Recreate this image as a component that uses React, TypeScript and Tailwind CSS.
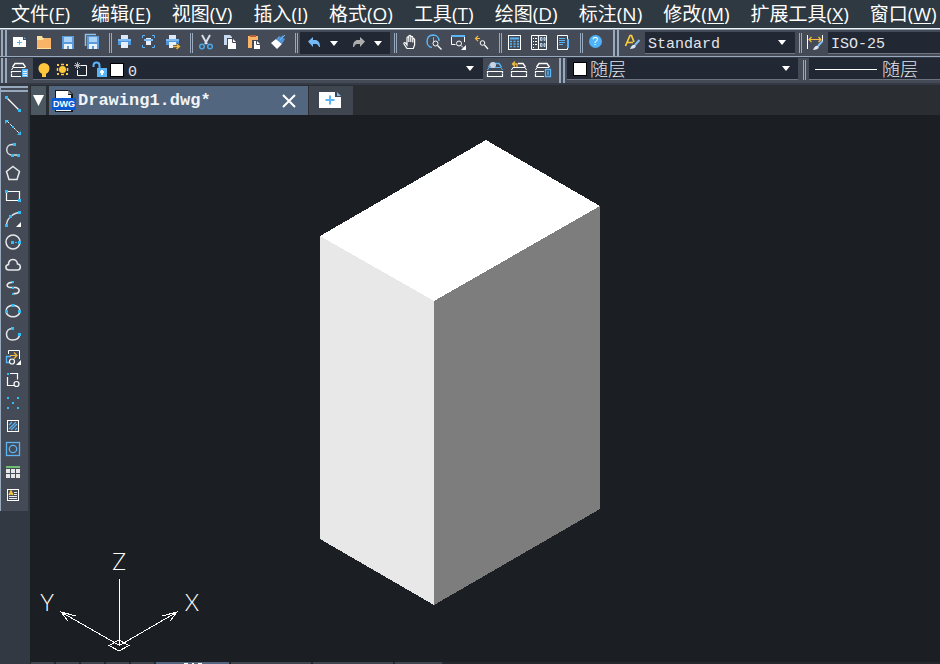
import type { ReactNode } from "react";

const BLUE = "#5ab4f5";
const SKY = "#33bdf7";
const AMBER = "#f6bb3c";

function Glyph({ children }: { children: ReactNode }) {
  return (
    <svg viewBox="0 0 20 20" className="block size-5 shrink-0" fill="none" stroke="none" aria-hidden="true">
      {children}
    </svg>
  );
}

function Tool({ label, children }: { label: string; children: ReactNode }) {
  return (
    <button type="button" aria-label={label} className="flex h-6 w-6 shrink-0 items-center justify-center">
      <Glyph>{children}</Glyph>
    </button>
  );
}

function Grip() {
  return <div className="w-1.5 shrink-0 self-stretch border-x-2 border-[#99a9bd]" />;
}

function Separator() {
  return <div className="h-5 w-[3px] shrink-0 border-x border-[#99a9bd]" />;
}

function Caret() {
  return (
    <svg viewBox="0 0 8 5" className="h-[5px] w-2" aria-hidden="true">
      <path d="M0 0h8L4 5z" fill="#fff" />
    </svg>
  );
}

function Combo({ label, value, className, pad }: { label: string; value: string; className: string; pad: string }) {
  return (
    <div className={`relative h-[22px] border-b border-[#6d747f] bg-[#212733] ${className}`}>
      <select
        aria-label={label}
        className={`block h-[21px] w-full appearance-none bg-transparent text-[#e2e5e9] outline-none ${pad}`}
      >
        <option>{value}</option>
      </select>
    </div>
  );
}

const menus: [string, string][] = [
  ["文件", "F"], ["编辑", "E"], ["视图", "V"], ["插入", "I"], ["格式", "O"], ["工具", "T"],
  ["绘图", "D"], ["标注", "N"], ["修改", "M"], ["扩展工具", "X"], ["窗口", "W"],
];

function MenuBar() {
  return (
    <nav className="flex h-7 items-center overflow-hidden bg-[#2f3941] font-['Open_Sans','Noto_Sans_CJK_SC',sans-serif] text-[19px] leading-7 text-white">
      {menus.map(([name, key]) => (
        <button key={key} type="button" className="shrink-0 pr-2.5 pl-[11px] whitespace-nowrap">
          {name}(<span className="underline underline-offset-2">{key}</span>)
        </button>
      ))}
    </nav>
  );
}

function PrinterShape() {
  return (
    <g shapeRendering="crispEdges">
      <path d="M7 2h7v4H7z" fill="#dce8f5" />
      <path d="M4 6h13v6H4z" fill="#4f97dc" />
      <path d="M4 6h13v2H4z" fill="#7dbaf2" />
      <path d="M7 9h7v6H7z" fill="#e7effa" />
    </g>
  );
}

function Floppy({ x, y }: { x: number; y: number }) {
  return (
    <g transform={`translate(${x} ${y})`} shapeRendering="crispEdges">
      <path d="M0 0h12v13H0z" fill="#5b9bdc" />
      <path d="M2 1h8v5H2z" fill="#a9d3fb" />
      <path d="M2 8h8v5H2z" fill="#e9f2fb" />
      <path d="M5 10h2v3H5z" fill="#5b9bdc" />
    </g>
  );
}

function Stack({ top = "#fff" }: { top?: string }) {
  return (
    <>
      <path d="M3.500 7L6 3.500h8L16.500 7" stroke={top} strokeWidth="1.300" />
      <path d="M2.500 10L4 7.500h12l1.500 2.500" stroke={top} />
      <path d="M2.500 13.500v-2h15v2M2.500 14v2.500h15V14" stroke="#fff" strokeWidth="1.200" />
    </>
  );
}

function MainToolbar() {
  return (
    <div className="flex h-[26px] items-center overflow-hidden bg-[#454b56] pl-px">
      <Grip />
      <Tool label="新建">
        <path d="M4 4h10v3h3v7H4z" fill="#fff" />
        <path d="M15 4l2 2h-2z" fill={BLUE} />
        <path d="M8 9.500h5M10.500 7v5" stroke={BLUE} strokeWidth="1" />
      </Tool>
      <Tool label="打开">
        <path d="M4 3h5l1 2h8v11H4z" fill="#ffe09a" />
        <path d="M4 7h6l1-2h7v10H4z" fill="#f9b468" />
      </Tool>
      <Tool label="保存"><Floppy x={5} y={3} /></Tool>
      <Tool label="全部保存">
        <path d="M4.500 13V1.500H15" stroke="#8ec1f2" strokeWidth="1.500" />
        <Floppy x={6} y={3} />
      </Tool>
      <div className="ml-1.5"><Separator /></div>
      <Tool label="打印"><PrinterShape /></Tool>
      <Tool label="打印预览">
        <path d="M4.500 5V2.500H7M14 2.500h2.500V5M16.500 12v2.500H14M7 14.500H4.500V12" stroke={BLUE} />
        <path d="M8 5h5v2H8zM8 8h5v4H8z" fill="#e7effa" />
        <path d="M6 6h9v2H6z" fill="#7dbaf2" />
      </Tool>
      <Tool label="发布">
        <PrinterShape />
        <path d="M11 13.500h6M14.500 11l3 2.500-3 2.500" stroke="#454b56" strokeWidth="3" />
        <path d="M11 13.500h6M14.500 11l3 2.500-3 2.500" stroke={AMBER} strokeWidth="1.300" />
      </Tool>
      <div className="ml-1.5"><Separator /></div>
      <Tool label="剪切">
        <path d="M7 2l5 9M15 2l-5 9" stroke="#d6dfeb" strokeWidth="2" />
        <circle cx="7" cy="13.500" r="2.300" stroke="#4ba7e8" strokeWidth="1.500" />
        <circle cx="15" cy="13.500" r="2.300" stroke="#4ba7e8" strokeWidth="1.500" />
      </Tool>
      <Tool label="复制">
        <path d="M5 2h6l2 2v8H5z" fill="#c7daf0" />
        <path d="M8 5h6l4 4v8H8z" fill="#454b56" />
        <path d="M9 6h5l3 3v7H9z" fill="#fff" />
        <path d="M13.500 6v3.500H17" stroke="#454b56" />
      </Tool>
      <Tool label="粘贴">
        <path d="M5 3h10v12H5z" fill="#f9b468" />
        <path d="M7 2h6v2H7z" fill="#b3603a" />
        <path d="M9 7h6l3 3v7H9z" fill="#454b56" />
        <path d="M11 8h3l3 3v5h-6z" fill="#fff" />
        <path d="M13.500 8v3.500H17" stroke="#454b56" />
      </Tool>
      <Tool label="特性匹配">
        <path d="M4 10l5-4 6 5-5 5z" fill="#fff" />
        <path d="M9 6l3-3 2 1 2-2 1 1-1 2 2 1-3 5z" fill="#4d94d8" />
        <path d="M18 2l-5 5" stroke="#76b6f0" />
      </Tool>
      <div className="mr-0.5 ml-1.5"><Separator /></div>
      <div className="flex h-[22px] w-[90px] shrink-0 items-center gap-1 bg-[#212733] pl-1">
        <div className="flex items-center">
          <button type="button" aria-label="放弃">
            <Glyph><path d="M4 8.500L9 4v3h2c3 0 5 2 5 7h-1c-1-2.500-2-3-4-3H9v3z" fill="#76b8f5" /></Glyph>
          </button>
          <button type="button" aria-label="放弃列表" className="flex w-5 justify-center"><Caret /></button>
        </div>
        <div className="flex items-center">
          <button type="button" aria-label="重做">
            <Glyph><path d="M17 8.500L12 4v3h-2c-3 0-5 2-5 7h1c1-2.500 2-3 4-3h2v3z" fill="#adadad" /></Glyph>
          </button>
          <button type="button" aria-label="重做列表" className="flex w-5 justify-center"><Caret /></button>
        </div>
      </div>
      <div className="ml-1"><Separator /></div>
      <Tool label="平移">
        <path d="M8 15.500L5 11c-.5-1 .5-2 1.500-1L8 12V5c0-1.500 1.800-1.500 1.800 0V9 3.500c0-1.500 2-1.500 2 0V9 4.500c0-1.500 2-1.500 2 0V9.500 6.500c0-1.300 1.800-1.300 1.800 0V12l-1.300 3.500z" stroke="#fff" strokeWidth="1.200" />
      </Tool>
      <Tool label="实时缩放">
        <path d="M9 14.500C2.500 14 2 2.500 10 2c4 0 6 3 6 6" stroke={BLUE} strokeWidth="1.500" />
        <path d="M10.500 4v6" stroke={BLUE} />
        <circle cx="12.500" cy="10.500" r="2.500" fill="#454b56" stroke="#fff" />
        <path d="M14.500 12.500l4 4" stroke="#fff" strokeWidth="1.300" />
      </Tool>
      <Tool label="窗口缩放">
        <path d="M4.500 3v8.500h4M17.500 3v6" stroke="#fff" />
        <path d="M4 2h14v2H4z" fill={BLUE} />
        <circle cx="12" cy="10.500" r="2.500" stroke="#fff" />
        <path d="M14 12.500l2 2" stroke="#fff" />
        <path d="M19 12v5h-5z" fill="#fff" />
      </Tool>
      <Tool label="上一个缩放">
        <path d="M9 5.500H4.500M7 3L4.500 5.500 7 8" stroke={AMBER} strokeWidth="1.200" />
        <circle cx="11.500" cy="10" r="2.300" stroke="#fff" />
        <path d="M13.500 12l3.500 4" stroke="#fff" strokeWidth="1.200" />
      </Tool>
      <div className="ml-1.5"><Separator /></div>
      <Tool label="计算器">
        <rect x="4.500" y="2.500" width="12" height="14" stroke="#fff" />
        <path d="M6 5.500h9" stroke={BLUE} strokeWidth="2" />
        <path d="M6 8.500h9M6 11h9M6 13.500h9" stroke={BLUE} strokeWidth="1.500" strokeDasharray="2 1.500" />
      </Tool>
      <Tool label="设计中心">
        <path d="M3.500 2.500h15v14h-15zM10.500 2.500v14" stroke="#fff" />
        <path d="M12.500 4.500h1.500v3h-1.500zM16 4.500h1v3h-1zM12.500 10.500h1.500v3h-1.500zM16 10.500h1v3h-1z" stroke="#b9d9f7" />
        <path d="M5 5.500h1M7 5.500h2M5 8.500h1M7 8.500h2M5 11.500h1M7 11.500h2M5 14.500h1" stroke="#fff" />
      </Tool>
      <Tool label="特性">
        <path d="M15.500 6V2.500h-10v14h10V14" stroke="#fff" />
        <path d="M15 6h2v9h-2z" fill={BLUE} />
        <path d="M7 5.500h6M7 7.500h6M7 9.500h6M7 11.500h4" stroke={BLUE} />
      </Tool>
      <div className="ml-1.5"><Separator /></div>
      <button type="button" aria-label="帮助" className="flex h-6 w-6 shrink-0 justify-center pt-1">
        <span className="size-[13px] rounded-full bg-[#4fb2fa] text-center font-['Liberation_Sans',sans-serif] text-[11px] leading-[13px] text-white">?</span>
      </button>
      <div className="ml-1.5 flex self-stretch"><Grip /></div>
      <Tool label="文字样式">
        <path d="M4.500 13L9 2.500h1.500L13 9M6 9.500h6" stroke="#f9ce3c" strokeWidth="1.700" />
        <path d="M18.500 7L14 12" stroke="#83bdf0" strokeWidth="2" />
        <path d="M9 16c1-3 3-5 5-4s0 4-5 4z" fill="#d7e4f4" />
      </Tool>
      <div className="relative ml-0.5 w-[150px] shrink-0">
        <Combo label="文字样式列表" value="Standard" className="font-['Liberation_Mono',monospace] text-[15px]" pad="pt-0.5 pl-[3px]" />
        <span className="pointer-events-none absolute top-2 right-[9px] flex"><Caret /></span>
      </div>
      <div className="ml-1"><Separator /></div>
      <Tool label="标注样式">
        <path d="M3.500 2v14M18.500 2v7" stroke="#fff" />
        <path d="M5 6.500h12M7.500 4L5 6.500 7.500 9M14.500 4L17 6.500 14.500 9" stroke={AMBER} strokeWidth="1.200" />
        <path d="M18.500 8L14 13" stroke="#83bdf0" strokeWidth="2" />
        <path d="M9 17c1-3 3-5 5-4s0 4-5 4z" fill="#d7e4f4" />
      </Tool>
      <Combo label="标注样式列表" value="ISO-25" className="ml-0.5 min-w-0 flex-1 font-['Liberation_Mono',monospace] text-[15px]" pad="pt-0.5 pl-[3px]" />
    </div>
  );
}

function LayerToolbar() {
  return (
    <div className="flex h-[25px] items-start overflow-hidden bg-[#454b56] pl-px">
      <Grip />
      <Tool label="图层特性管理器">
        <Stack />
        <path d="M12 8h7v9h-7z" fill="#454b56" />
        <path d="M13 9h6v8h-6z" fill="#5bb8fb" />
        <path d="M14 11.500h4M14 13.500h4M14 15.500h4" stroke="#e6f3fe" />
      </Tool>
      <div className="relative ml-0.5 w-[450px] shrink-0">
        <Combo label="图层" value="0" className="font-['Liberation_Mono',monospace] text-[15px]" pad="pt-1 pl-[95px]" />
        <div className="pointer-events-none absolute top-0.5 left-px flex gap-px">
          <svg viewBox="0 0 18 18" className="size-[18px]">
            <circle cx="10" cy="8.500" r="5.500" fill="#ffc83d" />
            <path d="M8 13h4v4H8z" fill="#ffc83d" />
          </svg>
          <svg viewBox="0 0 18 18" className="size-[18px]">
            <circle cx="9.500" cy="9.500" r="3.500" fill="#ffc83d" />
            <path d="M4 4h2v2H4zM13 4h2v2h-2zM4 13h2v2H4zM13 13h2v2h-2z" fill="#ffc83d" />
            <path d="M8 4.500h3M8 14.500h3M4.500 8v3M14.500 8v3" stroke="#ffc83d" strokeWidth="1.500" />
          </svg>
          <svg viewBox="0 0 18 18" className="size-[18px]" fill="none" stroke="#fff">
            <path d="M9 5.500h5.500v10h-9V10" />
            <path d="M5.500 2v7M2 5.500h7M3 3l5 5M8 3L3 8" stroke="#b7bbc0" />
          </svg>
          <svg viewBox="0 0 18 18" className="size-[18px]">
            <path d="M2.500 7V5.500c0-4 6-4 6 0V8" fill="none" stroke={BLUE} strokeWidth="2" />
            <path d="M6 8h10v9H6z" fill={BLUE} />
            <path d="M11 10v5M9 12h4" stroke="#fff" strokeWidth="2" />
          </svg>
          <span className="mt-1 ml-px size-3 bg-white outline outline-black" />
        </div>
        <span className="pointer-events-none absolute top-2 right-[9px] flex"><Caret /></span>
      </div>
      <Tool label="将对象的图层置为当前">
        <Stack top={BLUE} />
        <circle cx="8" cy="5" r="3" fill="#cad3e3" />
      </Tool>
      <Tool label="上一个图层">
        <Stack />
        <path d="M1 1h8v6H1z" fill="#454b56" />
        <path d="M8 7V4H3.500M6 1.500L3.500 4 6 6.500" stroke={AMBER} strokeWidth="1.300" />
      </Tool>
      <Tool label="图层状态管理器">
        <Stack />
        <path d="M11 8h8v9h-8z" fill="#454b56" />
        <path d="M12.500 9.500h5v7h-5zM14 12h2M14 14h2" stroke={BLUE} strokeWidth="1.300" />
      </Tool>
      <div className="mr-0.5 ml-1 flex self-stretch"><Grip /></div>
      <div className="relative w-[231px] shrink-0">
        <Combo label="颜色" value="随层" className="font-['Noto_Sans_CJK_SC',sans-serif] text-[18px] leading-[21px] font-light" pad="pl-[23px]" />
        <span className="pointer-events-none absolute top-[5px] left-[7px] size-3 bg-white outline outline-black" />
        <span className="pointer-events-none absolute top-2 right-2 flex"><Caret /></span>
      </div>
      <div className="mt-0.5 mr-[3px] ml-[5px]"><Separator /></div>
      <div className="relative min-w-0 flex-1">
        <Combo label="线型" value="随层" className="font-['Noto_Sans_CJK_SC',sans-serif] text-[18px] leading-[21px] font-light" pad="pl-[73px]" />
        <span className="pointer-events-none absolute top-[11px] left-1.5 h-px w-[62px] bg-white" />
      </div>
    </div>
  );
}

function Dot({ x, y }: { x: number; y: number }) {
  return <rect x={x - 1.5} y={y - 1.5} width="3" height="3" fill={SKY} />;
}

const drawTools: { label: string; art: ReactNode }[] = [
  { label: "直线", art: <><path d="M4 4l13 13" stroke="#fff" strokeWidth="1.200" /><Dot x={3.5} y={3.5} /><Dot x={16.5} y={16.5} /></> },
  { label: "构造线", art: <><path d="M4 4l13 13" stroke="#fff" strokeDasharray="3 1.500" /><path d="M2 3h4L2 7zM18 18h-4l4-4z" fill={SKY} /><rect x="9" y="9" width="2" height="2" fill={SKY} /></> },
  { label: "多段线", art: <><path d="M11.500 4.500H9c-7 0-7 10.500 0 10.500h7" stroke="#dce1e6" strokeWidth="1.400" /><Dot x={11.5} y={4.5} /><Dot x={9.5} y={15.5} /><Dot x={15.5} y={15.5} /></> },
  { label: "多边形", art: <path d="M10 3.500l6.500 5-2.500 8H6l-2.500-8z" stroke="#e6e9ec" strokeWidth="1.500" /> },
  { label: "矩形", art: <><path d="M3.500 5.500h13v9h-13z" stroke="#fff" strokeWidth="1.200" /><Dot x={3.5} y={5.5} /><Dot x={16.5} y={14.5} /></> },
  { label: "圆弧", art: <><path d="M3.500 16.500c0-6 5-12 13-13" stroke="#dce1e6" strokeWidth="1.400" /><Dot x={3.5} y={16.5} /><Dot x={7.5} y={7.5} /><Dot x={16.5} y={3.5} /><path d="M18 13v5h-5z" fill="#fff" /></> },
  { label: "圆", art: <><circle cx="10" cy="10" r="7" stroke="#e6e9ec" strokeWidth="1.500" /><Dot x={9.5} y={10.5} /><Dot x={16.5} y={10.5} /><path d="M12 10.500h2" stroke={SKY} /></> },
  { label: "修订云线", art: <path d="M6 15c-4 0-4-5-.5-5.500C5 3 14 3 14.500 9c4 0 3.500 6 0 6z" stroke="#e6e9ec" strokeWidth="1.600" /> },
  { label: "样条曲线", art: <><path d="M10 4.500C4 3.500 2 9 7 9.500h6c5 1 4 7-3 6" stroke="#e6e9ec" strokeWidth="1.600" /><path d="M9 3h2v2H9zM9 9h2v2H9zM9 15h2v2H9z" fill={SKY} /></> },
  { label: "椭圆", art: <><ellipse cx="10" cy="10" rx="7" ry="5.800" stroke="#e6e9ec" strokeWidth="1.500" /><Dot x={10} y={4.5} /><Dot x={3.5} y={10.5} /><Dot x={16.5} y={10.5} /></> },
  { label: "椭圆弧", art: <><path d="M9.500 4.500c-8 0-8 11.500 0 11.500 4 0 7-2 7-6" stroke="#e6e9ec" strokeWidth="1.500" /><Dot x={9.5} y={4.5} /><Dot x={16.5} y={10.5} /></> },
  { label: "插入块", art: <><path d="M5.500 7V3.500h11V12" stroke="#fff" /><path d="M7 15.500H3.500v-6H8" stroke={BLUE} strokeWidth="1.300" /><path d="M7 8.500h7M11 5.500l3 3-3 3" stroke={AMBER} strokeWidth="1.200" /><circle cx="9" cy="14.500" r="2.500" fill="#454b56" stroke="#fff" strokeWidth="1.200" /><path d="M18 13v5h-5z" fill="#fff" /></> },
  { label: "创建块", art: <><path d="M7 3.500h7.500v6M4.500 7v8.500h7" stroke="#fff" strokeWidth="1.200" /><circle cx="13.500" cy="14" r="2.500" stroke="#fff" strokeWidth="1.200" /><rect x="4" y="3" width="2" height="2" fill={SKY} /></> },
  { label: "点", art: <>{[[5, 5], [15, 5], [10, 10], [5, 15], [15, 15]].map(([x, y]) => <rect key={`${x}-${y}`} x={x - 1} y={y - 1} width="2" height="2" fill={SKY} />)}</> },
  { label: "图案填充", art: <><rect x="4.500" y="4.500" width="11" height="11" stroke="#fff" /><path d="M6 9l3-3M6 13l7-7M8 14l6-6M12 14l2-2" stroke={BLUE} strokeWidth="1.200" /></> },
  { label: "面域", art: <><rect x="3.500" y="3.500" width="13" height="13" stroke={BLUE} strokeWidth="1.300" /><circle cx="10" cy="10" r="3.700" stroke={BLUE} strokeWidth="1.300" /></> },
  { label: "表格", art: <><path d="M3 4h14v2H3z" fill="#6fbf73" /><path d="M3 7h4v4H3zM8 7h4v4H8zM13 7h4v4h-4zM3 12h4v4H3zM8 12h4v4H8zM13 12h4v4h-4z" fill="#e6e6e6" /></> },
  { label: "多行文字", art: <><rect x="4.500" y="4.500" width="11" height="11" stroke="#fff" /><path d="M6 10l2-4 2 4M6.500 9h3" stroke="#f9ce3c" strokeWidth="1.300" /><path d="M11 7.500h3M11 9.500h3M6 11.500h8M6 13.500h8" stroke="#e2e8f0" /></> },
];

function DrawPanel() {
  return (
    <aside className="w-[30px] shrink-0 bg-[#323943] pt-px">
      <div className="w-7 border-l border-[#99a9bd] bg-[#454b56] pb-1">
        <div className="h-1.5 border-y-2 border-[#99a9bd]" />
        <div className="flex flex-col pt-px">
          {drawTools.map((tool) => (
            <button key={tool.label} type="button" aria-label={tool.label} className="flex h-[23px] w-6 justify-center pt-px">
              <Glyph>{tool.art}</Glyph>
            </button>
          ))}
        </div>
      </div>
    </aside>
  );
}

function TabStrip() {
  return (
    <div className="flex h-[30px] shrink-0 bg-[#2a2d32] pt-px pl-px">
      <button type="button" aria-label="图纸列表" className="flex w-[15px] items-center justify-center bg-[#4b5862]">
        <svg viewBox="0 0 11 11" className="h-[11px] w-[11px]"><path d="M0 0h11L5.500 11z" fill="#fff" /></svg>
      </button>
      <div className="ml-[3px] flex w-[259px] items-center bg-[#53667f] pr-3 pl-[3px]">
        <svg viewBox="0 0 24 24" className="size-6 shrink-0" aria-hidden="true">
          <path d="M3 1h14l4 4v18H3z" fill="#15181c" />
          <path d="M4 2h12v4h3v16H4z" fill="#fff" />
          <path d="M16 1l4 4h-4z" fill="#8a8a8a" />
          <path d="M0 9h24v12H0z" fill="#0b5bd3" />
          <text x="1" y="18" fontFamily="Liberation Sans" fontWeight="700" fontSize="9" fill="#fff">DWG</text>
        </svg>
        <span className="ml-0.5 flex-1 font-['Liberation_Mono',monospace] text-[17px] leading-7 font-bold text-[#f0f3f6]">Drawing1.dwg*</span>
        <button type="button" aria-label="关闭">
          <svg viewBox="0 0 14 14" className="size-3.5" stroke="#fff" strokeWidth="2"><path d="M1 1l12 12M13 1L1 13" /></svg>
        </button>
      </div>
      <button type="button" aria-label="新建图纸" className="ml-px flex w-11 items-center justify-center bg-[#40464f] pr-0.5 pb-0.5">
        <svg viewBox="0 0 22 16" className="h-4 w-[22px]">
          <path d="M0 0h16v5h6v11H0z" fill="#fff" />
          <path d="M18 0l4 4h-4z" fill="#7db7ee" />
          <path d="M6.500 8h9M11 3.500v9" stroke={BLUE} strokeWidth="2" />
        </svg>
      </button>
    </div>
  );
}

function Drawing() {
  return (
    <main className="relative min-h-0 flex-1 overflow-hidden bg-[#1b1e22]">
      <svg width="281" height="466" viewBox="0 0 281 466" className="absolute top-6 left-[289px]" shapeRendering="crispEdges" role="img" aria-label="长方体">
        <path d="M1 97l114 65v304L1 400z" fill="#e8e8e8" />
        <path d="M115 162l166-95v303l-166 96z" fill="#7d7d7d" />
        <path d="M167 1l114 66-166 95L1 97z" fill="#fff" />
      </svg>
      <svg
        width="180" height="110" viewBox="0 0 180 110" className="absolute bottom-2 left-0"
        fill="none" stroke="#fff" shapeRendering="crispEdges" role="img" aria-label="坐标系"
      >
        <path d="M89.500 35v66M89.500 101.500L31 68M89.500 101.500L147 68" />
        <path d="M38 77l-7-9 15 4M140 77l7-9-15 4M79 101.500l10-5.500 10 5.500-10 5.500z" />
        <g fill="#fff" stroke="none" fontFamily="Lato" fontWeight="300" fontSize="23" textAnchor="middle">
          <text x="89" y="26">Z</text>
          <text x="17" y="67">Y</text>
          <text x="162" y="67">X</text>
        </g>
      </svg>
    </main>
  );
}

function LayoutStrip() {
  return (
    <div className="flex h-0.5 shrink-0 gap-0.5 overflow-hidden bg-[#25282c] pl-px">
      {[0, 1, 2, 3, 4].map((n) => <span key={n} className="w-[23px] bg-[#40464f]" />)}
      <span className="flex w-[73px] justify-center gap-1 bg-[#53667f] pt-px">
        <i className="w-1 bg-white" /><i className="w-0.5 bg-white" /><i className="w-1 bg-white" />
      </span>
      <span className="w-20 bg-[#40464f]" />
      <span className="w-20 bg-[#40464f]" />
      <span className="w-[47px] bg-[#40464f]" />
    </div>
  );
}

export default function App() {
  return (
    <div className="flex h-screen flex-col overflow-hidden bg-[#1b1e22]">
      <header className="shrink-0">
        <MenuBar />
        <div className="border-t border-b border-t-[#f0f2f4] border-b-[#8e9fb3]" />
        <MainToolbar />
        <div className="border-t border-b border-t-[#99a9bd] border-b-[#343a45]" />
        <LayerToolbar />
        <div className="h-0.5 bg-[#343a45]" />
      </header>
      <div className="flex min-h-0 flex-1">
        <DrawPanel />
        <div className="flex min-w-0 flex-1 flex-col">
          <TabStrip />
          <Drawing />
          <LayoutStrip />
        </div>
      </div>
    </div>
  );
}
